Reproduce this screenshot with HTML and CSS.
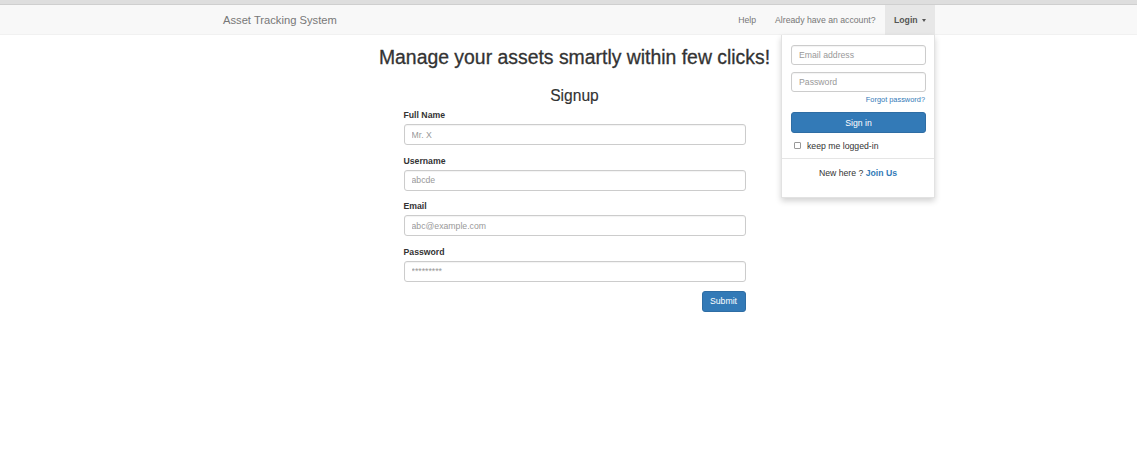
FILE: index.html
```html
<!DOCTYPE html>
<html>
<head>
<meta charset="utf-8">
<link rel="stylesheet" href="styles.css">
</head>
<body>
<div class="chrome"></div>
<nav class="navbar">
  <div class="nav-inner">
    <a class="brand">Asset Tracking System</a>
    <ul class="nav-right">
      <li><a class="nav-link">Help</a></li>
      <li><a class="nav-link">Already have an account?</a></li>
      <li class="dropdown">
        <a class="nav-link active">Login<span class="caret"></span></a>
        <div class="dropdown-menu">
          <div class="dd-body">
            <input class="dd-input" type="text" placeholder="Email address">
            <input class="dd-input" type="password" placeholder="Password">
            <div class="forgot"><a>Forgot password?</a></div>
            <button class="btn-primary btn-block">Sign in</button>
            <label class="keep"><span class="checkbox"></span>keep me logged-in</label>
          </div>
          <div class="dd-footer">New here ? <a class="join">Join Us</a></div>
        </div>
      </li>
    </ul>
  </div>
</nav>
<main class="main">
  <h1 class="title">Manage your assets smartly within few clicks!</h1>
  <h2 class="subtitle">Signup</h2>
  <form class="form">
    <div class="group">
      <label class="label">Full Name</label>
      <input class="input" type="text" placeholder="Mr. X">
    </div>
    <div class="group">
      <label class="label">Username</label>
      <input class="input" type="text" placeholder="abcde">
    </div>
    <div class="group">
      <label class="label">Email</label>
      <input class="input" type="text" placeholder="abc@example.com">
    </div>
    <div class="group">
      <label class="label">Password</label>
      <input class="input" type="text" placeholder="*********">
    </div>
    <div class="actions">
      <button class="btn-primary submit" type="button">Submit</button>
    </div>
  </form>
</main>
</body>
</html>
```
FILE: styles.css
```css
* { box-sizing: border-box; }
html, body { margin: 0; padding: 0; background: #fff; }
body { font-family: "Liberation Sans", Arial, sans-serif; color: #333; }

.chrome { height: 5px; background: #dedede; border-bottom: 1px solid #cfcfcf; }

.navbar { height: 30px; background: #f8f8f8; border-bottom: 1px solid #f1f1f1; }
.nav-inner { margin-left: 208px; width: 727px; height: 30px; display: flex; justify-content: space-between; align-items: stretch; }
.brand { padding: 0 15px; font-size: 11.2px; line-height: 30px; color: #777; }
.nav-right { list-style: none; margin: 0; padding: 0; display: flex; }
.nav-right li { position: relative; }
.nav-link { display: block; padding: 0 9.5px; font-size: 8.7px; line-height: 30px; color: #777; height: 30px; white-space: nowrap; }
.nav-link.active { display: flex; align-items: center; background: #e7e7e7; color: #555; font-weight: bold; padding: 0 0 0 9px; width: 50px; }
.caret { display: inline-block; width: 0; height: 0; border-top: 3px solid #555; border-left: 2.5px solid transparent; border-right: 2.5px solid transparent; margin-left: 4px; margin-top: 1px; }

.dropdown-menu { position: absolute; top: 30px; right: 0; width: 154px; background: #fff; border: 1px solid #e2e2e2; border-top: none; box-shadow: 0 3px 6px rgba(0,0,0,0.18); z-index: 5; }
.dd-body { padding: 10px 9px 0; }
.dd-input { display: block; width: 135px; height: 20px; border: 1px solid #ccc; border-radius: 3px; padding: 0 7px; font-family: inherit; font-size: 8.7px; color: #555; margin-bottom: 7px; box-shadow: inset 0 1px 1px rgba(0,0,0,0.05); }
.dd-input::placeholder { color: #999; }
.dd-input + .forgot { margin-top: -7px; }
.forgot { text-align: right; font-size: 7.4px; color: #337ab7; height: 20px; padding-top: 3px; line-height: 10px; }
.btn-primary { background: #337ab7; border: 1px solid #2e6da4; color: #fff; border-radius: 3px; font-family: inherit; font-size: 8.7px; }
.btn-block { display: block; width: 135px; height: 21px; margin: 0; }
.keep { display: flex; align-items: center; font-size: 8.7px; color: #333; height: 25px; padding-left: 3px; }
.checkbox { width: 7px; height: 7px; border: 1px solid #999; border-radius: 1px; margin-right: 6px; background: #fff; }
.dd-footer { border-top: 1px solid #e5e5e5; text-align: center; font-size: 8.7px; line-height: 11px; color: #333; padding: 9px 0 18px; }
.join { color: #337ab7; font-weight: bold; }

.main { margin-left: 208px; width: 733px; text-align: center; }
.title { margin: 10px 0 0; font-size: 19.4px; font-weight: normal; line-height: 24px; color: #333; -webkit-text-stroke: 0.3px #333; }
.subtitle { margin: 17px 0 0; font-size: 15.6px; font-weight: normal; line-height: 20px; color: #333; -webkit-text-stroke: 0.15px #333; }
.form { width: 342px; margin: 0 auto; text-align: left; }
.group { margin-top: 0; }
.group + .group { margin-top: 6.5px; }
.label { display: block; font-size: 8.7px; font-weight: bold; color: #333; line-height: 12px; padding-top: 3px; margin-bottom: 3px; }
.input { display: block; width: 342px; height: 21px; border: 1px solid #ccc; border-radius: 3px; padding: 0 7px; font-family: inherit; font-size: 8.7px; color: #555; box-shadow: inset 0 1px 1px rgba(0,0,0,0.05); }
.input::placeholder { color: #999; }
.actions { display: flex; justify-content: flex-end; margin-top: 9px; }
.submit { width: 44px; height: 21px; padding: 0; }
```
